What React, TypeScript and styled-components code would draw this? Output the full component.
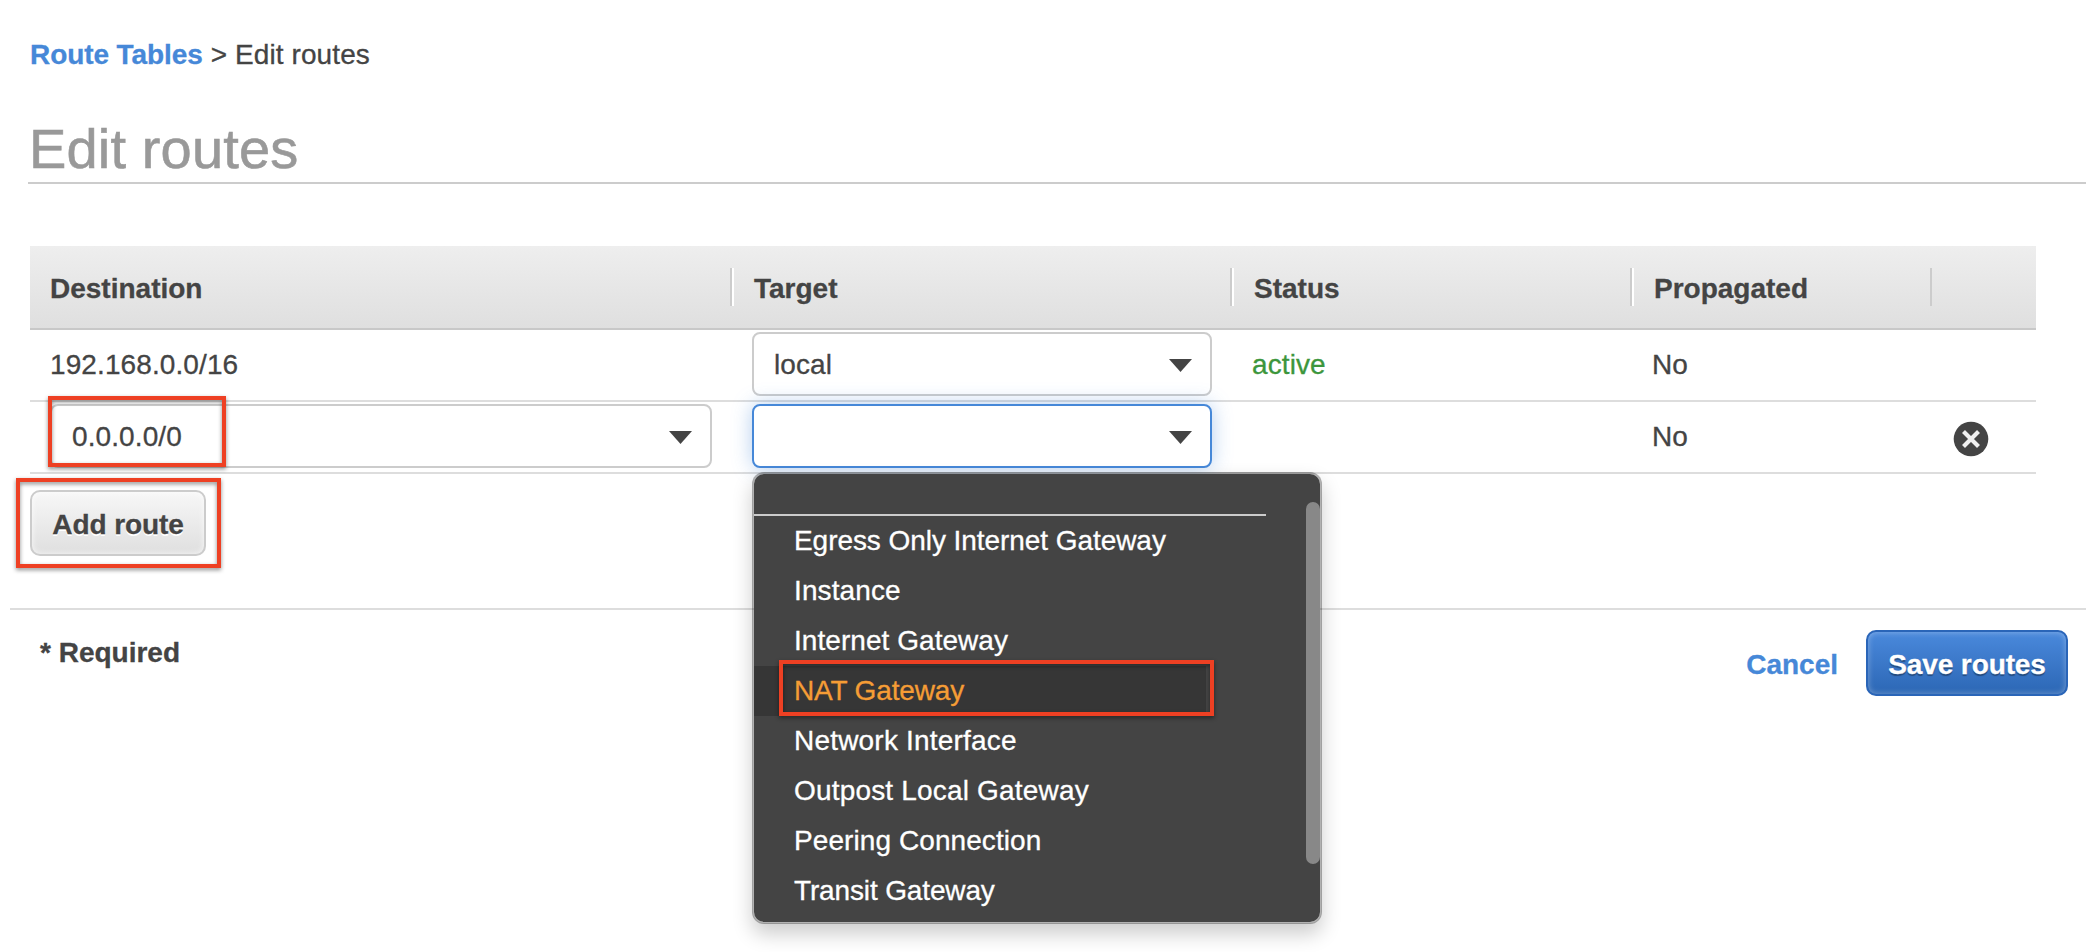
import React from "react";
import styled, { createGlobalStyle, css } from "styled-components";

const GlobalStyle = createGlobalStyle`
  * { box-sizing: border-box; }
  body {
    margin: 0;
    background: #fff;
    color: #444;
    font: 28px/31px "Liberation Sans", Arial, sans-serif;
    -webkit-text-stroke: 0.3px currentColor;
  }
`;

const Page = styled.div`
  display: flex;
  flex-direction: column;
  width: 2098px;
  height: 952px;
  padding: 39px 12px 0 10px;
  overflow: hidden;
`;

const Breadcrumb = styled.nav`
  padding-left: 20px;
  letter-spacing: 0.1px;
  white-space: pre;
`;

const CrumbLink = styled.a`
  color: #4688d8;
  font-weight: 700;
  letter-spacing: -0.08px;
`;

const Title = styled.h1`
  height: 67px;
  margin: 47px 0 0 18px;
  padding-left: 1px;
  border-bottom: 2px solid #ccc;
  color: #999;
  font-size: 56px;
  font-weight: 400;
  line-height: 63px;
  letter-spacing: 0.15px;
  -webkit-text-stroke-width: 0.6px;
`;

const Table = styled.section`
  width: 2006px;
  margin: 62px 0 0 20px;
`;

const columns = css`
  display: grid;
  grid-template-columns: 702px 500px 400px 300px 104px;
`;

const HeaderRow = styled.div`
  ${columns}
  height: 84px;
  padding-top: 22px;
  border-bottom: 2px solid #c8c8c8;
  background: linear-gradient(#eee, #dfdfdf);
`;

const HeaderCell = styled.div<{ $lit?: boolean }>`
  height: 38px;
  padding: 5px 0 0 20px;
  border-left: ${(p) => (p.$lit ? "2px solid #fff" : "0")};
  border-right: 2px solid #ccc;
  font-weight: 700;

  &:last-child { border-right: 0; }
`;

const Row = styled.div`
  ${columns}
  height: 72px;
  border-bottom: 2px solid #ddd;
`;

const Cell = styled.div<{ $color?: string; $top?: boolean }>`
  position: relative;
  display: flex;
  align-items: ${(p) => (p.$top ? "flex-start" : "center")};
  padding: ${(p) => (p.$top ? "2px 0 0" : "0 0 2px")} 20px;
  color: ${(p) => p.$color ?? "inherit"};
  letter-spacing: 0.1px;
`;

const SelectBox = styled.div<{ $width: number; $focused?: boolean }>`
  position: relative;
  display: flex;
  flex: none;
  align-items: center;
  justify-content: space-between;
  width: ${(p) => p.$width}px;
  height: 64px;
  padding: 1px 18px 0 20px;
  border: 2px solid ${(p) => (p.$focused ? "#4688d8" : "#ccc")};
  border-radius: 8px;
  background: #fff;
  box-shadow: ${(p) => (p.$focused ? "0 0 20px rgba(70, 136, 216, 0.4)" : "none")};
`;

const Arrow = styled.svg`
  width: 23px;
  height: 13px;
  margin: 2px 0 0 auto;
  fill: #444;
`;

const Marker = styled.span<{ $x: number; $y: number; $w: number; $h: number }>`
  position: absolute;
  left: ${(p) => p.$x}px;
  top: ${(p) => p.$y}px;
  width: ${(p) => p.$w}px;
  height: ${(p) => p.$h}px;
  border: 4px solid #ee4023;
  filter: drop-shadow(0 2px 2px rgba(0, 0, 0, 0.45));
  pointer-events: none;
`;

const Menu = styled.div`
  position: absolute;
  z-index: 2;
  left: 20px;
  top: 70px;
  width: 570px;
  height: 452px;
  border: 2px solid rgba(0, 0, 0, 0.3);
  border-radius: 12px;
  background: #444;
  background-clip: padding-box;
  box-shadow: 0 10px 20px rgba(0, 0, 0, 0.2);
  color: #fff;
`;

const BlankOption = styled.div`
  width: 512px;
  height: 42px;
  border-bottom: 2px solid #ccc;
`;

const Option = styled.div<{ $active?: boolean; $tracking: number }>`
  position: relative;
  display: flex;
  align-items: center;
  width: 452px;
  height: 50px;
  padding: 0 0 2px 40px;
  background: ${(p) => (p.$active ? "#363636" : "transparent")};
  color: ${(p) => (p.$active ? "#f59d35" : "#fff")};
  letter-spacing: ${(p) => p.$tracking}px;
  white-space: nowrap;
`;

const ScrollThumb = styled.div`
  position: absolute;
  right: 0;
  top: 28px;
  width: 14px;
  height: 362px;
  border-radius: 7px;
  background: #888;
`;

const RemoveIcon = styled.svg`
  width: 36px;
  height: 36px;
  margin: 6px 0 0 1px;
`;

const Button = styled.button<{ $primary?: boolean }>`
  position: relative;
  width: ${(p) => (p.$primary ? 202 : 176)}px;
  height: 66px;
  padding: 2px 0 0;
  border: 2px solid ${(p) => (p.$primary ? "#2a65b8" : "#ccc")};
  border-radius: 10px;
  background: ${(p) =>
    p.$primary ? "linear-gradient(#4a89dc, #2c67b5)" : "linear-gradient(#f7f7f7, #dfdfdf)"};
  box-shadow: inset 0 0 6px rgba(255, 255, 255, ${(p) => (p.$primary ? 0.35 : 0.8)});
  color: ${(p) => (p.$primary ? "#fff" : "#444")};
  font: 700 28px/31px "Liberation Sans", Arial, sans-serif;
  letter-spacing: -0.1px;
  text-shadow: ${(p) => (p.$primary ? "0 2px 1px rgba(0, 0, 0, 0.35)" : "0 2px 0 #fff")};
  white-space: nowrap;
`;

const Actions = styled.div`
  height: 134px;
  padding: 16px 0 0 20px;
`;

const Footer = styled.footer`
  display: flex;
  align-items: flex-start;
  height: 120px;
  padding: 20px 18px 0 30px;
  border-top: 2px solid #ddd;
`;

const Required = styled.strong`
  padding-top: 7px;
`;

const Cancel = styled.a`
  margin: 19px 28px 0 auto;
  color: #4688d8;
  font-weight: 700;
`;

const Chevron = () => (
  <Arrow viewBox="0 0 23 13">
    <path d="M0 0H23L11.5 13Z" />
  </Arrow>
);

const options = [
  { name: "Egress Only Internet Gateway", tracking: -0.06 },
  { name: "Instance", tracking: 0.12 },
  { name: "Internet Gateway", tracking: 0.05 },
  { name: "NAT Gateway", tracking: -0.15 },
  { name: "Network Interface", tracking: 0.2 },
  { name: "Outpost Local Gateway", tracking: 0.18 },
  { name: "Peering Connection", tracking: 0.08 },
  { name: "Transit Gateway", tracking: -0.14 },
];

export default function App() {
  const selected = "NAT Gateway";
  return (
    <Page>
      <GlobalStyle />
      <Breadcrumb>
        <CrumbLink>Route Tables</CrumbLink>
        {" > Edit routes"}
      </Breadcrumb>
      <Title>Edit routes</Title>

      <Table>
        <HeaderRow>
          <HeaderCell>Destination</HeaderCell>
          <HeaderCell $lit>Target</HeaderCell>
          <HeaderCell $lit>Status</HeaderCell>
          <HeaderCell $lit>Propagated</HeaderCell>
          <HeaderCell />
        </HeaderRow>
        <Row>
          <Cell>192.168.0.0/16</Cell>
          <Cell $top>
            <SelectBox $width={460}>
              local
              <Chevron />
            </SelectBox>
          </Cell>
          <Cell $color="#3c963c">active</Cell>
          <Cell>No</Cell>
          <Cell />
        </Row>
        <Row>
          <Cell $top>
            <SelectBox $width={662}>
              0.0.0.0/0
              <Chevron />
              <Marker $x={-4} $y={-10} $w={178} $h={71} />
            </SelectBox>
          </Cell>
          <Cell $top>
            <SelectBox $width={460} $focused>
              <Chevron />
            </SelectBox>
            <Menu>
              <BlankOption />
              {options.map(({ name, tracking }) => (
                <Option key={name} $active={name === selected} $tracking={tracking}>
                  {name}
                  {name === selected && <Marker $x={25} $y={-6} $w={435} $h={56} />}
                </Option>
              ))}
              <ScrollThumb />
            </Menu>
          </Cell>
          <Cell />
          <Cell>No</Cell>
          <Cell>
            <RemoveIcon viewBox="0 0 36 36">
              <circle cx="18" cy="18" r="17.3" fill="#444" />
              <path d="M10.5 10.5L25.5 25.5M25.5 10.5L10.5 25.5" stroke="#f0f0f0" strokeWidth="4.2" />
            </RemoveIcon>
          </Cell>
        </Row>
      </Table>

      <Actions>
        <Button>
          Add route
          <Marker $x={-16} $y={-14} $w={205} $h={90} />
        </Button>
      </Actions>

      <Footer>
        <Required>* Required</Required>
        <Cancel>Cancel</Cancel>
        <Button $primary>Save routes</Button>
      </Footer>
    </Page>
  );
}
